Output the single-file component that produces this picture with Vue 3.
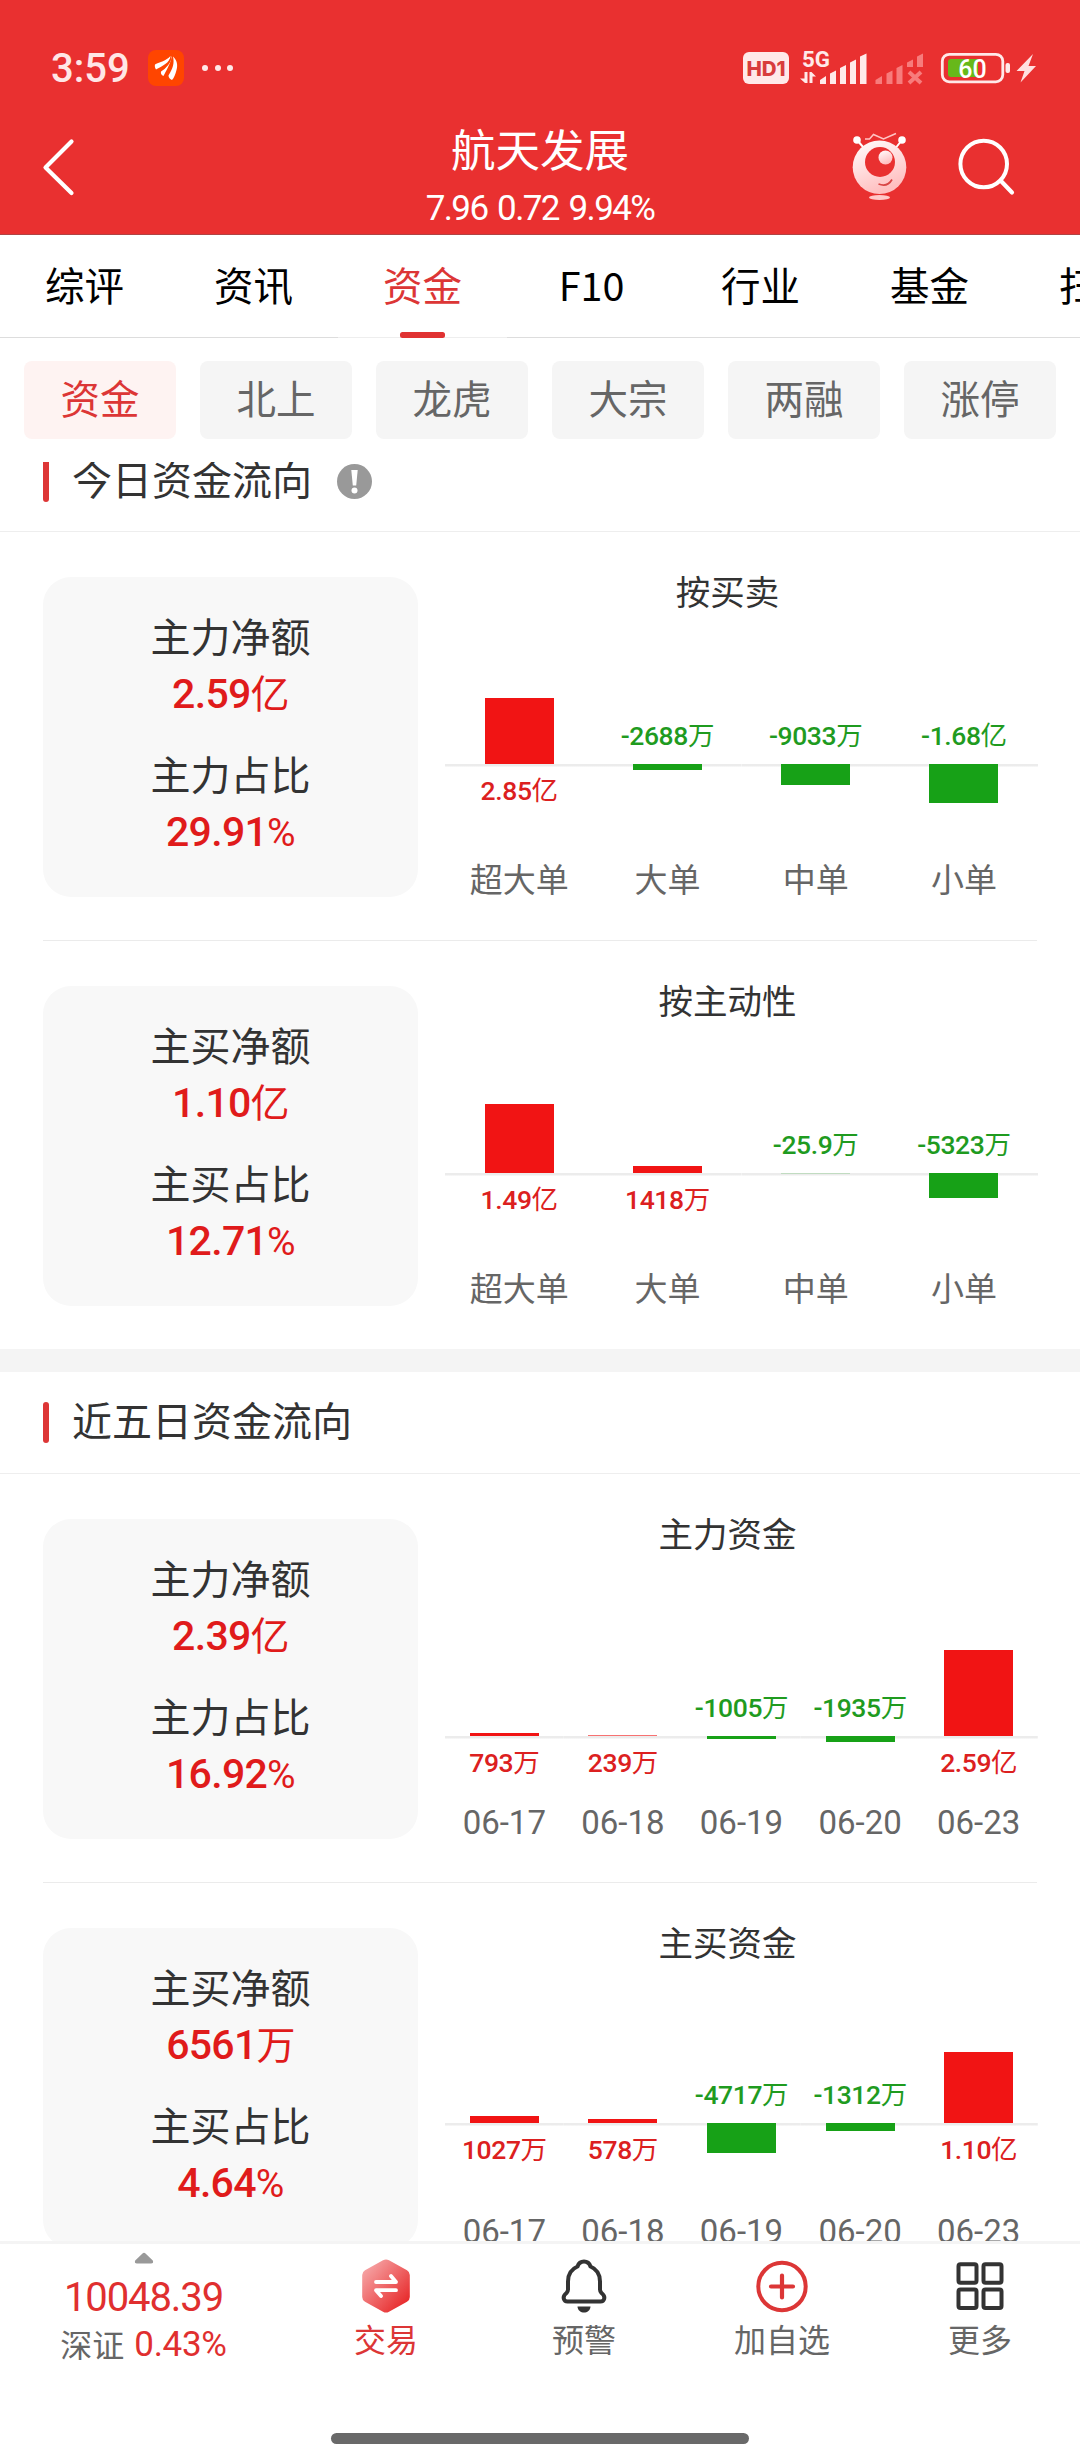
<script setup>
const tabs = ['综评', '资讯', '资金', 'F10', '行业', '基金', '扫雷']
const pills = ['资金', '北上', '龙虎', '大宗', '两融', '涨停']

const sections = [
  {
    title: '今日资金流向',
    hint: true,
    rows: [
      {
        stats: [
          { label: '主力净额', num: '2.59', unit: '亿' },
          { label: '主力占比', num: '29.91', unit: '%' },
        ],
        title: '按买卖',
        axis: 187,
        bars: [
          { name: '超大单', num: '2.85', unit: '亿', h: 66 },
          { name: '大单', num: '-2688', unit: '万', h: 6 },
          { name: '中单', num: '-9033', unit: '万', h: 21 },
          { name: '小单', num: '-1.68', unit: '亿', h: 39 },
        ],
      },
      {
        stats: [
          { label: '主买净额', num: '1.10', unit: '亿' },
          { label: '主买占比', num: '12.71', unit: '%' },
        ],
        title: '按主动性',
        axis: 187,
        bars: [
          { name: '超大单', num: '1.49', unit: '亿', h: 69 },
          { name: '大单', num: '1418', unit: '万', h: 7 },
          { name: '中单', num: '-25.9', unit: '万', h: 1 },
          { name: '小单', num: '-5323', unit: '万', h: 25 },
        ],
      },
    ],
  },
  {
    title: '近五日资金流向',
    hint: false,
    rows: [
      {
        stats: [
          { label: '主力净额', num: '2.39', unit: '亿' },
          { label: '主力占比', num: '16.92', unit: '%' },
        ],
        title: '主力资金',
        axis: 217,
        bars: [
          { name: '06-17', num: '793', unit: '万', h: 3 },
          { name: '06-18', num: '239', unit: '万', h: 1 },
          { name: '06-19', num: '-1005', unit: '万', h: 3 },
          { name: '06-20', num: '-1935', unit: '万', h: 6 },
          { name: '06-23', num: '2.59', unit: '亿', h: 86 },
        ],
      },
      {
        stats: [
          { label: '主买净额', num: '6561', unit: '万' },
          { label: '主买占比', num: '4.64', unit: '%' },
        ],
        title: '主买资金',
        axis: 195,
        bars: [
          { name: '06-17', num: '1027', unit: '万', h: 7 },
          { name: '06-18', num: '578', unit: '万', h: 4 },
          { name: '06-19', num: '-4717', unit: '万', h: 30 },
          { name: '06-20', num: '-1312', unit: '万', h: 8 },
          { name: '06-23', num: '1.10', unit: '亿', h: 71 },
        ],
      },
    ],
  },
]

const isDown = (bar) => bar.num.startsWith('-')
</script>

<template>
  <div class="app">
    <header class="header">
      <div class="status">
        <span class="time">3:59</span>
        <svg class="app-badge" width="36" height="36" viewBox="0 0 36 36">
          <rect width="36" height="36" rx="8" fill="#ff4500" />
          <path d="M7 14.500C12 12 18 11 22.500 6C22 13 14 16 8 19.500C7 18 6.500 16 7 14.500Z" fill="#fff" />
          <path d="M23.500 6C24.500 8 21 16 15.500 26C13.500 25 12.500 23.500 13 21.500C18 17 22.500 13 23.500 6Z" fill="#fff" />
          <path d="M25 6.500C29 10 30 15 28.500 20C27.500 24 26 28 24 30C22 29 20.500 27.500 20.500 25.500C25 18 26.500 13 25 6.500Z" fill="#fff" />
          <path d="M12.500 21C18 17.500 21.500 14 23 8" stroke="#ff4500" stroke-width="1.200" fill="none" />
        </svg>
        <span class="dots"><i></i><i></i><i></i></span>
        <div class="status-right">
          <span class="hd">HD1</span>
          <svg class="signal" width="124" height="40" viewBox="800 46 124 40">
            <g fill="#ffe9e9">
              <text x="802" y="67" class="g5" textLength="28" lengthAdjust="spacingAndGlyphs">5G</text>
              <path d="M804.500 72h3v11h-2.500l-5-4.500h4.500zM809.500 83v-11h2l4.500 4.500h-3.500v6.500z" />
              <path d="M820 84v-4l6-4v8zM830 84v-10.500l6-3v13.500zM840 84v-16l6-3v19zM850 84v-21.500l6-3v24.500zM860 84v-27.500l6.500-3v30.500z" />
            </g>
            <g fill="#f77c7c">
              <path d="M875.500 84v-4l6.500-4v8zM886.500 84v-10.500l6-3v13.500zM896.500 84v-16l6-3v19zM907 67v-4.500l6-3v7.500zM917 67v-10.500l6-3v13.500z" />
              <path d="M909 72l12 11M921 72l-12 11" stroke="#f77c7c" stroke-width="4" />
            </g>
          </svg>
          <svg class="battery" width="97" height="32" viewBox="940 52 97 32">
            <rect x="942.300" y="54.300" width="60.500" height="27.500" rx="7" fill="none" stroke="#ffe9e9" stroke-width="2.800" />
            <path d="M951 59h27v18h-27q-3 0-3-3v-12q0-3 3-3z" fill="#67b81a" />
            <rect x="1005.500" y="63" width="4.500" height="10" rx="2" fill="#ffe9e9" />
            <text x="972.500" y="77.500" text-anchor="middle" class="pct">60</text>
            <path d="M1033 54L1016.500 71H1024.500L1020.500 82.500L1036 66H1028.500Z" fill="#ffe0e0" />
          </svg>
        </div>
      </div>
      <div class="titlebar">
        <svg class="back" width="36" height="62" viewBox="0 0 36 62">
          <path d="M30.500 5.500L4.500 31.500L30.500 57" fill="none" stroke="#fff" stroke-width="4.200" stroke-linecap="round" stroke-linejoin="round" />
        </svg>
        <div class="stock">
          <h1>航天发展</h1>
          <p>7.96 0.72 9.94%</p>
        </div>
        <div class="actions">
          <svg width="56" height="70" viewBox="852 132 56 70">
            <defs>
              <linearGradient id="face" x1="0" y1="0" x2=".4" y2="1">
                <stop offset="0" stop-color="#fff" />
                <stop offset="1" stop-color="#ffbfc0" />
              </linearGradient>
            </defs>
            <path d="M865 140h4.500l4-4.500l10 4.500l12.500-5.500" fill="none" stroke="#ffc4c4" stroke-width="1.500" />
            <path d="M857 141l6.500 7.500M902 141l-6 7.500" stroke="#fff" stroke-width="2" />
            <circle cx="857" cy="141" r="3.800" fill="#fff" />
            <circle cx="902" cy="141" r="3.800" fill="#fff" />
            <circle cx="879.500" cy="168.300" r="26.800" fill="url(#face)" />
            <circle cx="880" cy="163" r="15" fill="#e93030" />
            <circle cx="885.500" cy="158.500" r="7" fill="url(#face)" />
            <path d="M878.500 185q9 3.500 13.500-4.500" fill="none" stroke="#d94545" stroke-width="1.700" />
            <ellipse cx="879.500" cy="198.500" rx="10.500" ry="2.500" fill="#ffc9c9" />
          </svg>
          <svg width="60" height="60" viewBox="956 137 60 60">
            <circle cx="983.700" cy="165" r="23.300" fill="none" stroke="#fff" stroke-width="4" />
            <path d="M1001 182l11 11.500" stroke="#fff" stroke-width="4.200" stroke-linecap="round" />
          </svg>
        </div>
      </div>
    </header>

    <nav class="tabs">
      <span v-for="(tab, i) in tabs" :key="tab" class="tab" :class="{ active: i === 2 }">{{ tab }}</span>
    </nav>

    <div class="pills">
      <span v-for="(pill, i) in pills" :key="pill" class="pill" :class="{ active: i === 0 }">{{ pill }}</span>
    </div>

    <main class="content">
      <section v-for="section in sections" :key="section.title" class="section">
        <div class="section-head">
          <i class="mark"></i>
          <h2>{{ section.title }}</h2>
          <svg v-if="section.hint" class="hint" width="35" height="35" viewBox="0 0 35 35">
            <circle cx="17.500" cy="17.500" r="17.500" fill="#999" />
            <path d="M14.300 6h6.400l-1.500 15.500h-3.400z" fill="#fff" />
            <circle cx="17.500" cy="26.500" r="3" fill="#fff" />
          </svg>
        </div>
        <div v-for="row in section.rows" :key="row.title" class="row">
          <div class="card">
            <div v-for="stat in row.stats" :key="stat.label" class="stat">
              <span class="stat-label">{{ stat.label }}</span>
              <span class="stat-value">{{ stat.num }}<em>{{ stat.unit }}</em></span>
            </div>
          </div>
          <div class="chart">
            <h3>{{ row.title }}</h3>
            <div class="plot">
              <div v-for="bar in row.bars" :key="bar.name" class="col" :class="{ down: isDown(bar), thin: bar.h <= 1 }">
                <div class="above" :style="{ height: row.axis - 40 + 'px' }">
                  <span v-if="isDown(bar)" class="value">{{ bar.num }}<em>{{ bar.unit }}</em></span>
                  <i v-else class="bar" :style="{ height: bar.h + 'px' }"></i>
                </div>
                <div class="below">
                  <i v-if="isDown(bar)" class="bar" :style="{ height: bar.h + 'px' }"></i>
                  <span v-else class="value">{{ bar.num }}<em>{{ bar.unit }}</em></span>
                </div>
                <span class="name">{{ bar.name }}</span>
              </div>
            </div>
          </div>
        </div>
      </section>
    </main>

    <footer class="bottom">
      <div class="index">
        <svg width="20" height="12" viewBox="0 0 20 12">
          <path d="M8.500 1.500Q10 0 11.500 1.500L18.800 8.500Q20 11.500 17 11.500H3Q0 11.500 1.200 8.500Z" fill="#999" />
        </svg>
        <span class="points">10048.39</span>
        <span class="market">深证 <b>0.43%</b></span>
      </div>
      <div class="item trade">
        <svg width="56" height="56" viewBox="358.500 2257.500 56 56">
          <defs>
            <linearGradient id="hex" x1="0" y1="0" x2="1" y2="1">
              <stop offset=".1" stop-color="#f6a5a6" />
              <stop offset=".85" stop-color="#e82f30" />
            </linearGradient>
          </defs>
          <path d="M383.500 2259.800Q386.500 2258 389.500 2259.800L407.500 2269.800Q410.300 2271.500 410.300 2274.500V2296.500Q410.300 2299.500 407.500 2301.200L389.500 2311.200Q386.500 2313 383.500 2311.200L365.500 2301.200Q362.700 2299.500 362.700 2296.500V2274.500Q362.700 2271.500 365.500 2269.800Z" fill="url(#hex)" />
          <path d="M376.500 2281.500H396.500L391.500 2275.500M396.500 2289.700H376.500L381.500 2295.500" fill="none" stroke="#fff" stroke-width="3.800" stroke-linecap="round" stroke-linejoin="round" />
        </svg>
        <span>交易</span>
      </div>
      <div class="item">
        <svg width="56" height="56" viewBox="556.500 2257.500 56 56">
          <path d="M584.500 2261c-3.500 0-5.500 2-6.500 5c-6 2.500-9.500 8-9.500 15v8q0 2-1.500 3.500c-5 4-2.500 8.500 1 8.500h33c3.500 0 6-4.500 1-8.500q-1.500-1.500-1.500-3.500v-8c0-7-3.500-12.500-9.500-15c-1-3-3-5-6.500-5z" fill="none" stroke="#333" stroke-width="4" stroke-linejoin="round" />
          <path d="M578 2306h13c-.500 8-12.500 8-13 0z" fill="#333" />
        </svg>
        <span>预警</span>
      </div>
      <div class="item">
        <svg width="56" height="56" viewBox="755 2257.500 56 56">
          <circle cx="783" cy="2286" r="23.700" fill="none" stroke="#dc3636" stroke-width="4" />
          <path d="M772 2286h22M783 2275v22" stroke="#dc3636" stroke-width="4.200" stroke-linecap="round" />
        </svg>
        <span>加自选</span>
      </div>
      <div class="item">
        <svg width="56" height="56" viewBox="952.500 2257.500 56 56">
          <g fill="none" stroke="#333" stroke-width="4">
            <rect x="959" y="2263.700" width="18" height="18.500" rx="2" />
            <rect x="984" y="2263.700" width="18" height="18.500" rx="2" />
            <rect x="959" y="2289" width="18" height="18.500" rx="2" />
            <rect x="984" y="2289" width="18" height="18.500" rx="2" />
          </g>
        </svg>
        <span>更多</span>
      </div>
    </footer>
    <div class="home"><i></i></div>
  </div>
</template>

<style>
body {
  margin: 0;
  background: #fff;
}
</style>

<style scoped>
.app {
  width: 1080px;
  height: 2460px;
  display: flex;
  flex-direction: column;
  overflow: hidden;
  background: #fff;
  color: #333;
  font-family: "Noto Sans CJK SC", sans-serif;
}
h1, h2, h3, p {
  margin: 0;
  font-weight: 400;
}
em, b {
  font-style: normal;
  font-weight: 400;
}
svg {
  display: block;
  flex: none;
}
.header {
  flex: none;
  height: 235px;
  background: #e93030;
  color: #fff;
  box-sizing: border-box;
  border-bottom: 1px solid #b04444;
}
.status {
  display: flex;
  align-items: center;
  height: 36px;
  padding: 50px 43px 0 51px;
}
.time {
  width: 97px;
  font: 500 40px/37px Roboto, sans-serif;
  color: #ffe6e6;
}
.dots {
  display: flex;
  gap: 6.500px;
  margin-left: 18px;
}
.dots i {
  width: 6px;
  height: 6px;
  border-radius: 50%;
  background: #ffe9e9;
}
.status-right {
  display: flex;
  align-items: center;
  margin-left: auto;
}
.hd {
  width: 46px;
  height: 32px;
  margin-right: 11px;
  border-radius: 6px;
  background: #ffe9e9;
  color: #d83c3c;
  font: 800 20.500px/33px Inter, sans-serif;
  text-align: center;
}
.signal {
  margin-top: -4px;
}
.g5 {
  font: 700 22.500px Roboto, sans-serif;
}
.pct {
  font: 500 25px Roboto, sans-serif;
  fill: #fff;
}
.battery {
  margin-left: 16px;
}
.titlebar {
  display: grid;
  grid-template-columns: 240px 1fr 240px;
  height: 148px;
}
.back {
  margin: 50px 0 0 41px;
}
.stock {
  text-align: center;
}
.stock h1 {
  margin-top: 32px;
  font-size: 44.500px;
  line-height: 60px;
}
.stock p {
  font: 400 35px/40px Roboto, sans-serif;
  letter-spacing: -1.600px;
  word-spacing: 2.500px;
  margin-top: 11px;
}
.actions {
  display: flex;
  align-items: center;
  gap: 48px;
  padding-top: 26px;
  height: 134px;
  box-sizing: border-box;
  margin-left: 12px;
}
.tabs {
  flex: none;
  display: flex;
  height: 103px;
  overflow: hidden;
}
.tab {
  flex: none;
  display: flex;
  flex-direction: column;
  align-items: center;
  width: 169px;
  height: 103px;
  box-sizing: border-box;
  border-bottom: 1px solid #ddd;
  padding-top: 19px;
  font-size: 39.500px;
  line-height: 60px;
  color: #000;
}
.tab.active {
  color: #dc3636;
  border-bottom-color: #eee;
}
.tab.active::after {
  content: "";
  width: 45px;
  height: 6px;
  margin-top: 18px;
  margin-bottom: -1px;
  border-radius: 2.500px;
  background: #e03232;
}
.pills {
  flex: none;
  display: flex;
  gap: 24px;
  padding: 23px 24px;
}
.pill {
  width: 152px;
  height: 78px;
  border-radius: 8px;
  background: #f5f5f5;
  color: #666;
  font-size: 39.500px;
  line-height: 72px;
  text-align: center;
}
.pill.active {
  background: #fef3f2;
  color: #dc3636;
}
.content {
  flex: none;
  height: 1779px;
  overflow: hidden;
}
.section + .section {
  border-top: 23px solid #f4f4f4;
}
.section-head {
  display: flex;
  align-items: center;
  height: 101px;
  margin-bottom: 45px;
  padding: 0 43px;
  border-bottom: 1px solid #eee;
}
.section:first-child .section-head {
  height: 69px;
  align-items: flex-start;
}
.mark {
  width: 6px;
  height: 41px;
  border-radius: 3px;
  background: #dd3636;
}
.section:first-child .mark {
  height: 40px;
  border-radius: 0 0 3px 3px;
}
.section-head h2 {
  margin-left: 23px;
  margin-top: -7px;
  font-size: 40px;
  line-height: 58px;
}
.section:first-child h2 {
  margin-top: -13px;
}
.hint {
  margin: 2px 0 0 25px;
}
.row {
  display: flex;
  margin: 0 43px;
  padding-bottom: 43px;
}
.row + .row {
  border-top: 1px solid #ebebeb;
  padding-top: 45px;
}
.card {
  flex: none;
  display: flex;
  flex-direction: column;
  gap: 25px;
  width: 375px;
  height: 320px;
  box-sizing: border-box;
  padding-top: 30px;
  border-radius: 28px;
  background: #f8f8f8;
}
.stat {
  display: flex;
  flex-direction: column;
  align-items: center;
}
.stat-label {
  font-size: 40px;
  line-height: 56px;
}
.stat-value {
  height: 57px;
  font: 500 41px/63px Roboto, "Noto Sans CJK SC", sans-serif;
  letter-spacing: -0.700px;
  color: #e01b1b;
}
.stat-value em {
  font-size: 39px;
}
.chart {
  flex: 1;
  display: flex;
  flex-direction: column;
}
h3 {
  height: 40px;
  font-size: 34.500px;
  line-height: 27px;
  text-align: center;
}
.plot {
  flex: 1;
  display: flex;
  margin-left: 27px;
  margin-right: -1px;
}
.col {
  flex: 1 1 0;
  min-width: 0;
  display: flex;
  flex-direction: column;
}
.above,
.below {
  display: flex;
  flex-direction: column;
  align-items: center;
}
.above {
  flex: none;
  justify-content: flex-end;
}
.below {
  flex: 1;
  background: linear-gradient(#ececec, #ececec) top / 100% 2.500px no-repeat;
}
.bar {
  width: 69px;
  background: #f11414;
}
.down .bar {
  background: #17a117;
}
.thin .bar {
  opacity: 0.6;
}
.thin.down .bar {
  opacity: 0.2;
}
.value {
  font: 500 26.500px/30px Roboto, "Noto Sans CJK SC", sans-serif;
  letter-spacing: -0.400px;
  color: #dc2020;
  white-space: nowrap;
}
.below .value {
  margin-top: 12px;
}
.down .value {
  color: #1f9b1f;
  margin-bottom: 13px;
}
.name {
  height: 36px;
  font: 400 33px/40px Roboto, "Noto Sans CJK SC", sans-serif;
  color: #666;
  text-align: center;
}
.bottom {
  flex: none;
  display: flex;
  height: 149px;
  border-top: 3px solid #f4f4f4;
}
.index {
  display: flex;
  flex-direction: column;
  align-items: center;
  width: 287px;
  padding-top: 8px;
}
.points {
  margin-top: 11px;
  font: 400 40px/46px Roboto, sans-serif;
  letter-spacing: -1.100px;
  color: #e02f2f;
}
.market {
  display: flex;
  gap: 10px;
  font-size: 32px;
  line-height: 44px;
  color: #666;
  white-space: nowrap;
}
.market b {
  font: 400 35px/48px Roboto, sans-serif;
  letter-spacing: -0.300px;
  color: #e02f2f;
}
.item {
  display: flex;
  flex-direction: column;
  align-items: center;
  width: 198px;
  padding-top: 14px;
  font-size: 32px;
  line-height: 50px;
  color: #666;
}
.item span {
  margin-top: -1px;
}
.trade {
  color: #dc3636;
}
.home {
  display: flex;
  justify-content: center;
  padding-top: 40px;
}
.home i {
  width: 418px;
  height: 10.500px;
  border-radius: 6px;
  background: #696969;
}
</style>
